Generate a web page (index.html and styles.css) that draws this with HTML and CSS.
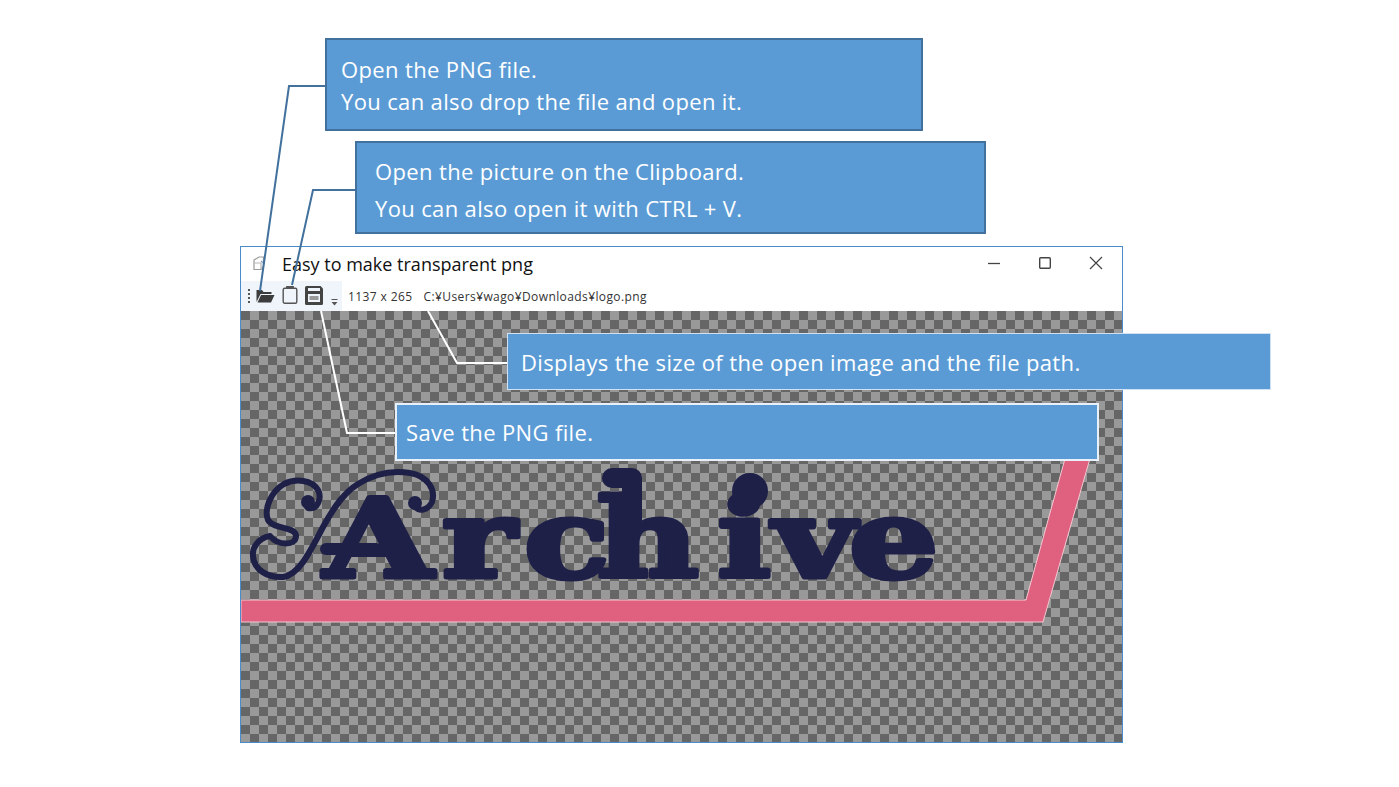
FILE: index.html
```html
<!DOCTYPE html>
<html lang="en">
<head>
  <meta charset="UTF-8" />
  <title>Easy to make transparent png</title>
  <link rel="stylesheet" href="styles.css">
</head>
<body>
  <div class="slide">
    <!-- App window -->
    <div class="window">
      <div class="titlebar">
        <svg class="app-icon" width="14" height="15" viewBox="0 0 14 15" fill="none" stroke="#9a9a9a" stroke-width="1.2">
          <path d="M2 4 L7 1 H11.5 V10 L9 13.5 H2 Z"/>
          <path d="M2 7 H9 V13" stroke="#b5b5b5"/>
          <path d="M9 5 L12.5 8" stroke="#7f9fc0"/>
        </svg>
        <span class="title">Easy to make transparent png</span>
        <div class="winbtns">
          <svg width="14" height="14" viewBox="0 0 14 14" stroke="#444" stroke-width="1.3" fill="none"><path d="M1 7.5 H13"/></svg>
          <svg width="14" height="14" viewBox="0 0 14 14" stroke="#444" stroke-width="1.4" fill="none"><rect x="1.7" y="1.7" width="10.6" height="10.6" rx="1"/></svg>
          <svg width="14" height="14" viewBox="0 0 14 14" stroke="#444" stroke-width="1.2" fill="none"><path d="M1 1 L13 13 M13 1 L1 13"/></svg>
        </div>
      </div>
      <div class="toolbar">
        <div class="tools">
          <span class="grip"></span>
          <svg class="tool-open" width="19" height="14" viewBox="0 0 19 14">
            <path d="M0.5 13 V1 H6 L7.5 3 H15.5 V5 H4.5 Z" fill="#3c3c3c"/>
            <path d="M1.5 13.5 L5 6 H18.5 L15 13.5 Z" fill="#3c3c3c"/>
          </svg>
          <svg class="tool-clip" width="16" height="18" viewBox="0 0 16 18" fill="none" stroke="#555" stroke-width="1.4">
            <rect x="1.2" y="2.2" width="13.6" height="15" rx="1.5"/>
            <path d="M5 2.2 V1 H11 V2.2" stroke-width="1.8"/>
          </svg>
          <svg class="tool-save" width="18" height="19" viewBox="0 0 18 19">
            <path d="M0 1.5 Q0 0 1.5 0 H15.5 L18 2.5 V17.5 Q18 19 16.5 19 H1.5 Q0 19 0 17.5 Z" fill="#444"/>
            <rect x="3" y="2" width="12" height="3" fill="#eff5fb"/>
            <rect x="3" y="8" width="12" height="8" fill="#eff5fb"/>
            <rect x="4.5" y="10" width="9" height="4" fill="#9a9a9a"/>
          </svg>
          <svg class="tool-more" width="7" height="7" viewBox="0 0 7 7" fill="#555">
            <rect x="0.5" y="0" width="6" height="1"/>
            <path d="M0.5 3 H6.5 L3.5 6.5 Z"/>
          </svg>
        </div>
        <span class="info">1137 x 265</span>
        <span class="info path">C:¥Users¥wago¥Downloads¥logo.png</span>
      </div>
      <div class="canvas">
        <svg class="artwork" viewBox="241 311 881 431" width="881" height="431">
          <path class="band" d="M241 600 H1026 L1066 455 H1091 L1043 622 H241 Z"/>
          <text class="logo" transform="scale(1.3 1)" x="249 340 403 459 552 595 653" y="577">Archive</text>
          <g class="swash">
            <path d="M308 508 C318 510 322 498 318 490 C312 480 296 478 284 484 C270 492 264 510 268 520 C274 530 296 526 296 536 C296 546 278 546 270 536 C258 538 252 548 253 556 C254 570 268 578 283 577 C298 575 308 556 323 527 C335 505 345 492 358 484 C374 474 392 470 410 473 C428 476 436 490 432 502 C428 510 420 512 415 507"/>
            <circle cx="308" cy="502" r="7"/>
            <circle cx="415" cy="503" r="7"/>
            <path class="bar" d="M326 549 H376"/>
            <!-- tall stem and round dot -->
            <path class="stem" d="M612 478 H632 V530"/>
            <circle cx="750" cy="491" r="18"/>
          </g>
        </svg>
      </div>
    </div>

    <!-- Leader lines -->
    <svg class="leaders" width="1399" height="787" viewBox="0 0 1399 787">
      <path class="dark" d="M325 86 H289 L260 291"/>
      <path class="dark" d="M355 190 H313 L292 285"/>
      <path class="light" d="M321 311 L347 433 H395"/>
      <path class="light" d="M428 311 L457 363 H508"/>
    </svg>

    <!-- Callouts -->
    <div class="callout open-file">
      <p>Open the PNG file.</p>
      <p>You can also drop the file and open it.</p>
    </div>
    <div class="callout open-clip">
      <p>Open the picture on the Clipboard.</p>
      <p>You can also open it with CTRL + V.</p>
    </div>
    <div class="callout size-path">
      <p>Displays the size of the open image and the file path.</p>
    </div>
    <div class="callout save-file">
      <p>Save the PNG file.</p>
    </div>
  </div>
</body>
</html>
```

FILE: styles.css
```css
body {
  margin: 0;
  background: white;
  font-family: 'Open Sans', 'Noto Sans', sans-serif;
}
p {
  margin: 0;
}
.slide {
  position: relative;
  width: 1399px;
  height: 787px;
  overflow: hidden;
}

/* window */
.window {
  position: absolute;
  left: 240px;
  top: 246px;
  width: 881px;
  height: 495px;
  border: 1px solid #4a8bc9;
  display: flex;
  flex-direction: column;
  background: white;
}
.titlebar {
  height: 34px;
  display: flex;
  align-items: center;
  padding-left: 11px;
}
.app-icon {
  margin-top: -2px;
}
.title {
  margin-left: 16px;
  font-size: 18px;
  color: #111;
}
.winbtns {
  margin-left: auto;
  margin-top: -3px;
  padding-right: 19px;
  display: flex;
  gap: 37px;
}
.toolbar {
  height: 30px;
  display: flex;
  align-items: center;
}
.tools {
  width: 101px;
  height: 30px;
  background: #eff5fb;
  display: flex;
  align-items: center;
}
.grip {
  width: 2px;
  height: 15px;
  margin-left: 7px;
  background: repeating-linear-gradient(#555 0 2px, transparent 2px 4px);
}
.tool-open {
  margin-left: 6px;
}
.tool-clip {
  margin-left: 7px;
  margin-top: -2px;
}
.tool-save {
  margin-left: 7px;
  margin-top: -1px;
}
.tool-more {
  margin-left: 8px;
  margin-top: 13px;
}
.info {
  font-size: 12px;
  letter-spacing: 0.4px;
  color: #333;
  margin-left: 6px;
}
.info.path {
  margin-left: 11px;
}
.canvas {
  flex: 1;
  background-image: conic-gradient(#999 25%, #666 0 50%, #999 0 75%, #666 0);
  background-size: 18px 18px;
}
.artwork {
  display: block;
}
.band {
  fill: #e0607f;
  stroke: #f3c9d2;
  stroke-width: 1;
}
.logo {
  font-family: 'DejaVu Serif', serif;
  font-weight: bold;
  font-size: 108px;
  fill: #1e2048;
  stroke: #1e2048;
  stroke-width: 5px;
  stroke-linejoin: round;
}
.swash path {
  fill: none;
  stroke: #1e2048;
  stroke-width: 6;
  stroke-linecap: round;
  stroke-linejoin: round;
}
.swash .bar {
  stroke-width: 12;
}
.swash .stem {
  stroke-width: 20;
}
.swash circle {
  fill: #1e2048;
}

/* leader lines */
.leaders {
  position: absolute;
  left: 0;
  top: 0;
  fill: none;
}
.dark {
  stroke: #41719c;
  stroke-width: 2;
}
.light {
  stroke: white;
  stroke-width: 2;
}

/* callouts */
.callout {
  position: absolute;
  box-sizing: border-box;
  background: #5b9bd5;
  color: white;
  font-size: 22px;
  letter-spacing: 0.36px;
  display: flex;
  flex-direction: column;
  justify-content: center;
}
.open-file {
  left: 325px;
  top: 38px;
  width: 598px;
  height: 93px;
  border: 2px solid #41719c;
  padding-left: 14px;
  line-height: 32px;
}
.open-clip {
  left: 355px;
  top: 141px;
  width: 631px;
  height: 93px;
  border: 2px solid #41719c;
  padding: 4px 0 0 18px;
  line-height: 37px;
}
.size-path {
  left: 507px;
  top: 333px;
  width: 764px;
  height: 57px;
  border: 1px solid #cfe2f3;
  padding-left: 13px;
}
.save-file {
  left: 395px;
  top: 403px;
  width: 704px;
  height: 58px;
  border: 2px solid #e8f1f9;
  padding-left: 9px;
}
```
